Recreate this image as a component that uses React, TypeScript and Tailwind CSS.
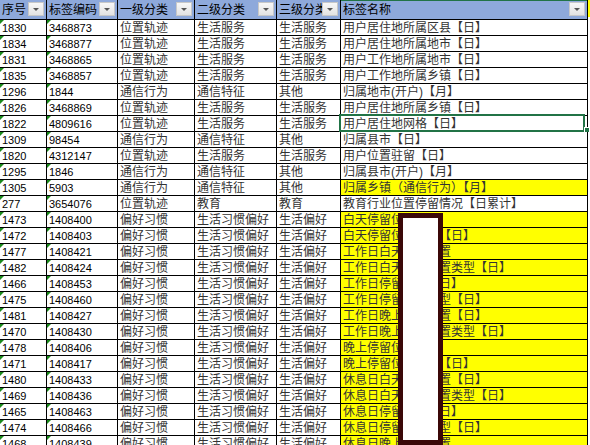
import type { ReactNode } from 'react';

type Row = {
  id: string;
  code: string;
  level1: string;
  level2: string;
  level3: string;
  name: string;
  highlight?: boolean;
  selected?: boolean;
};

const rows: Row[] = [
  { id: '1830', code: '3468873', level1: '位置轨迹', level2: '生活服务', level3: '生活服务', name: '用户居住地所属区县【日】' },
  { id: '1834', code: '3468877', level1: '位置轨迹', level2: '生活服务', level3: '生活服务', name: '用户居住地所属地市【日】' },
  { id: '1831', code: '3468865', level1: '位置轨迹', level2: '生活服务', level3: '生活服务', name: '用户工作地所属地市【日】' },
  { id: '1835', code: '3468857', level1: '位置轨迹', level2: '生活服务', level3: '生活服务', name: '用户工作地所属乡镇【日】' },
  { id: '1296', code: '1844', level1: '通信行为', level2: '通信特征', level3: '其他', name: '归属地市(开户)【月】' },
  { id: '1826', code: '3468869', level1: '位置轨迹', level2: '生活服务', level3: '生活服务', name: '用户居住地所属乡镇【日】' },
  { id: '1822', code: '4809616', level1: '位置轨迹', level2: '生活服务', level3: '生活服务', name: '用户居住地网格【日】', selected: true },
  { id: '1309', code: '98454', level1: '通信行为', level2: '通信特征', level3: '其他', name: '归属县市【日】' },
  { id: '1820', code: '4312147', level1: '位置轨迹', level2: '生活服务', level3: '生活服务', name: '用户位置驻留【日】' },
  { id: '1295', code: '1846', level1: '通信行为', level2: '通信特征', level3: '其他', name: '归属县市(开户)【月】' },
  { id: '1305', code: '5903', level1: '通信行为', level2: '通信特征', level3: '其他', name: '归属乡镇（通信行为）【月】', highlight: true },
  { id: '277', code: '3654076', level1: '位置轨迹', level2: '教育', level3: '教育', name: '教育行业位置停留情况【日累计】' },
  { id: '1473', code: '1408400', level1: '偏好习惯', level2: '生活习惯偏好', level3: '生活偏好', name: '白天停留位置', highlight: true },
  { id: '1472', code: '1408403', level1: '偏好习惯', level2: '生活习惯偏好', level3: '生活偏好', name: '白天停留位置类型【日】', highlight: true },
  { id: '1477', code: '1408421', level1: '偏好习惯', level2: '生活习惯偏好', level3: '生活偏好', name: '工作日白天停留位置', highlight: true },
  { id: '1482', code: '1408424', level1: '偏好习惯', level2: '生活习惯偏好', level3: '生活偏好', name: '工作日白天停留位置类型【日】', highlight: true },
  { id: '1466', code: '1408453', level1: '偏好习惯', level2: '生活习惯偏好', level3: '生活偏好', name: '工作日停留位置【日】', highlight: true },
  { id: '1475', code: '1408460', level1: '偏好习惯', level2: '生活习惯偏好', level3: '生活偏好', name: '工作日停留位置类型【日】', highlight: true },
  { id: '1481', code: '1408427', level1: '偏好习惯', level2: '生活习惯偏好', level3: '生活偏好', name: '工作日晚上停留位置【日】', highlight: true },
  { id: '1470', code: '1408430', level1: '偏好习惯', level2: '生活习惯偏好', level3: '生活偏好', name: '工作日晚上停留位置类型【日】', highlight: true },
  { id: '1478', code: '1408406', level1: '偏好习惯', level2: '生活习惯偏好', level3: '生活偏好', name: '晚上停留位置', highlight: true },
  { id: '1471', code: '1408417', level1: '偏好习惯', level2: '生活习惯偏好', level3: '生活偏好', name: '晚上停留位置类型【日】', highlight: true },
  { id: '1480', code: '1408433', level1: '偏好习惯', level2: '生活习惯偏好', level3: '生活偏好', name: '休息日白天停留位置【日】', highlight: true },
  { id: '1469', code: '1408436', level1: '偏好习惯', level2: '生活习惯偏好', level3: '生活偏好', name: '休息日白天停留位置类型【日】', highlight: true },
  { id: '1465', code: '1408463', level1: '偏好习惯', level2: '生活习惯偏好', level3: '生活偏好', name: '休息日停留位置【日】', highlight: true },
  { id: '1474', code: '1408466', level1: '偏好习惯', level2: '生活习惯偏好', level3: '生活偏好', name: '休息日停留位置类型【日】', highlight: true },
  { id: '1468', code: '1408439', level1: '偏好习惯', level2: '生活习惯偏好', level3: '生活偏好', name: '休息日晚上停留位置', highlight: true },
];

const headers = ['序号', '标签编码', '一级分类', '二级分类', '三级分类', '标签名称'];

function FilterButton() {
  return (
    <span className="absolute top-[2px] right-[2px] z-10 flex h-[14px] w-[16px] items-center justify-center border border-[#c8c8c8] bg-gradient-to-b from-[#f7f7f7] to-[#e3e3e3]">
      <span className="h-0 w-0 border-x-[3px] border-t-[3px] border-x-transparent border-t-[#555]" />
    </span>
  );
}

function TextFlag() {
  return (
    <span className="absolute top-0 left-0 h-0 w-0 border-t-[4px] border-r-[4px] border-t-[#1a8a1a] border-r-transparent" />
  );
}

function Cell({ children, className = '' }: { children?: ReactNode; className?: string }) {
  return (
    <div
      className={`relative flex items-end whitespace-nowrap border-r border-b border-black px-[2px] leading-[13px] ${className}`}
    >
      {children}
    </div>
  );
}

export default function App() {
  return (
    <div
      className="relative h-[445px] w-[590px] overflow-hidden bg-white text-[12px] text-black"
      style={{ fontFamily: '"Liberation Sans", "Noto Sans CJK SC", sans-serif' }}
    >
      <div className="grid grid-cols-[47px_71px_77px_82px_64px_247px_2px] grid-rows-[20px] auto-rows-[16px]">
        {headers.map((title, i) => (
          <div
            key={title}
            className={`relative flex items-end whitespace-nowrap border-r border-b border-black bg-[#8ea9db] px-[2px] pb-[2px] leading-[13px] ${
              i === 5 ? 'shadow-[inset_0_1px_0_#217346]' : ''
            }`}
          >
            {title}
            <FilterButton />
          </div>
        ))}
        <div className="h-[17px] bg-[#ffff00]" />

        {rows.map((row) => (
          <div key={row.id} className="contents">
            <Cell className="text-[11px]">
              <TextFlag />
              {row.id}
            </Cell>
            <Cell className="text-[11px]">
              <TextFlag />
              {row.code}
            </Cell>
            <Cell className="text-[#333]">{row.level1}</Cell>
            <Cell className="text-[#333]">{row.level2}</Cell>
            <Cell className="text-[#333]">{row.level3}</Cell>
            <Cell className={`text-[#333] ${row.highlight ? 'bg-[#ffff00]' : ''}`}>
              {row.name}
              {row.selected && (
                <>
                  <span className="pointer-events-none absolute top-[-2px] right-[2px] bottom-[-1px] left-[-2px] border-2 border-[#217346]" />
                  <span className="absolute right-[-3px] bottom-[-2px] h-[6px] w-[6px] border border-white bg-[#217346]" />
                </>
              )}
            </Cell>
            <div />
          </div>
        ))}
      </div>

      {/* redacted block */}
      <div className="absolute top-[213px] left-[398px] h-[232px] w-[45px] border-[5px] border-[#3b0808] bg-white" />
    </div>
  );
}
